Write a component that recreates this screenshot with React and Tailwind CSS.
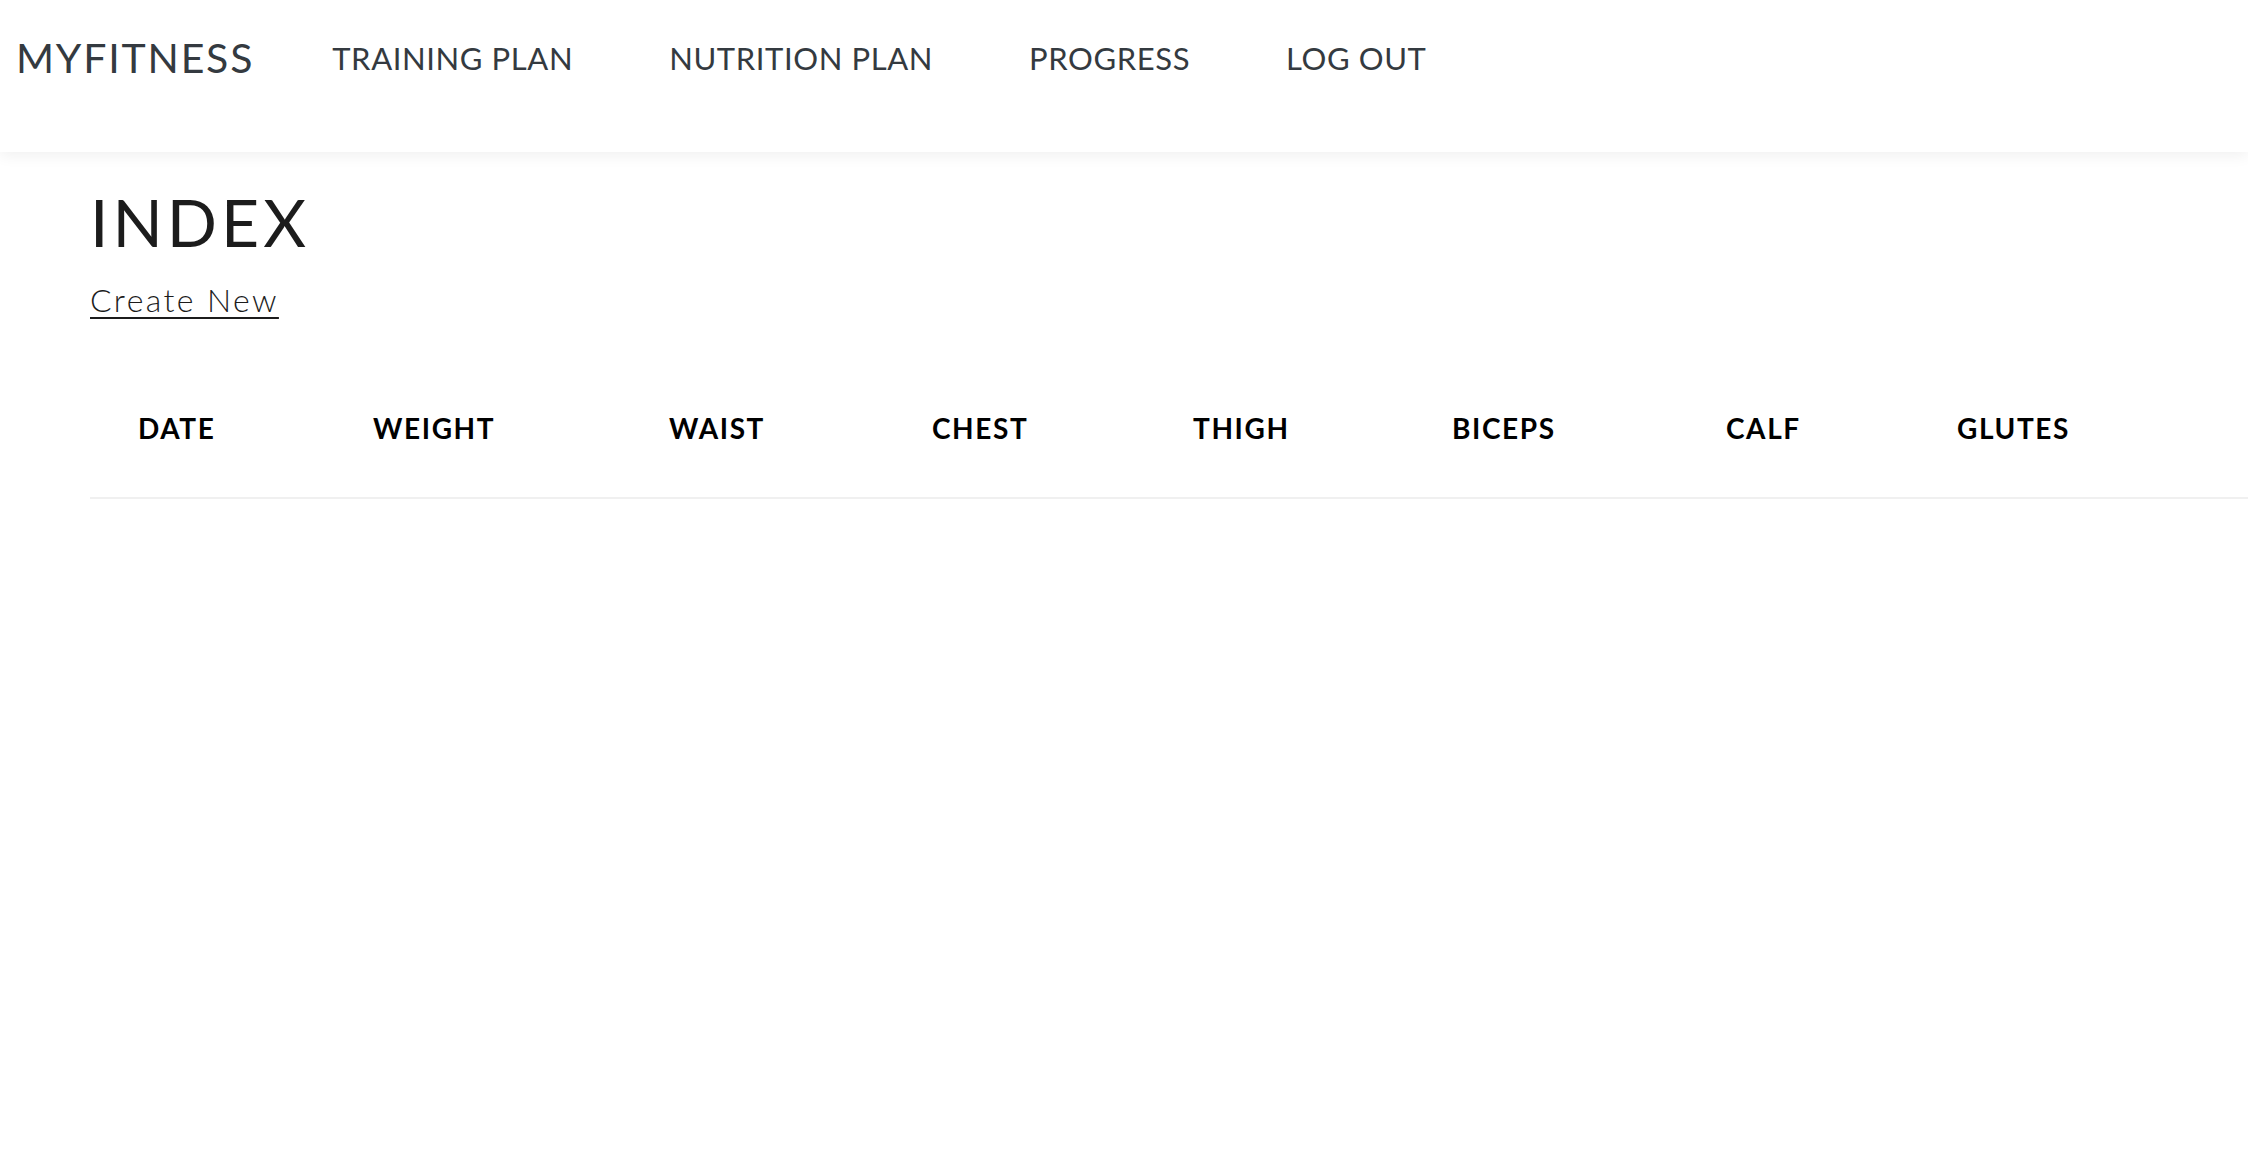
const navLinks = ["TRAINING PLAN", "NUTRITION PLAN", "PROGRESS", "LOG OUT"];

const columns = [
  { label: "DATE", width: "w-[235px]" },
  { label: "WEIGHT", width: "w-[296px]" },
  { label: "WAIST", width: "w-[263px]" },
  { label: "CHEST", width: "w-[261px]" },
  { label: "THIGH", width: "w-[259px]" },
  { label: "BICEPS", width: "w-[274px]" },
  { label: "CALF", width: "w-[231px]" },
  { label: "GLUTES", width: "w-[339px]" },
];

function Navbar() {
  return (
    <nav className="relative z-10 h-[152px] bg-white shadow-[0_4px_14px_rgba(0,0,0,0.06)]">
      <div className="flex items-center pl-[16px] pt-[37px]">
        <a href="#" className="text-[41px] leading-[42px] text-[#343a40] tracking-[1.8px] mr-[30px]">
          MYFITNESS
        </a>
        <ul className="flex items-center">
          {navLinks.map((link) => (
            <li key={link}>
              <a href="#" className="block px-[48px] text-[31px] leading-[42px] text-[#343a40] tracking-[0.6px]">
                {link}
              </a>
            </li>
          ))}
        </ul>
      </div>
    </nav>
  );
}

function ProgressIndex() {
  return (
    <main className="pl-[90px] pt-[25px]">
      <h1 className="text-[66px] leading-[90px] text-[#1c1c1c] tracking-[4px]">INDEX</h1>
      <a href="#" className="inline-block mt-[13px] text-[32px] leading-[40px] font-light text-[#1c1c1c] tracking-[2.4px] underline decoration-2 underline-offset-[5px]">
        Create New
      </a>

      <table className="mt-[60px] border-collapse">
        <thead>
          <tr className="border-b-2 border-[#f0f0f0]">
            {columns.map((col) => (
              <th
                key={col.label}
                className={`${col.width} pl-[48px] pt-[32px] pb-[53px] text-left text-[28px] leading-[32px] font-bold text-black tracking-[1.6px]`}
              >
                {col.label}
              </th>
            ))}
          </tr>
        </thead>
        <tbody></tbody>
      </table>
    </main>
  );
}

export default function App() {
  return (
    <div className="min-h-screen bg-white font-['Lato',sans-serif] overflow-hidden">
      <Navbar />
      <ProgressIndex />
    </div>
  );
}
